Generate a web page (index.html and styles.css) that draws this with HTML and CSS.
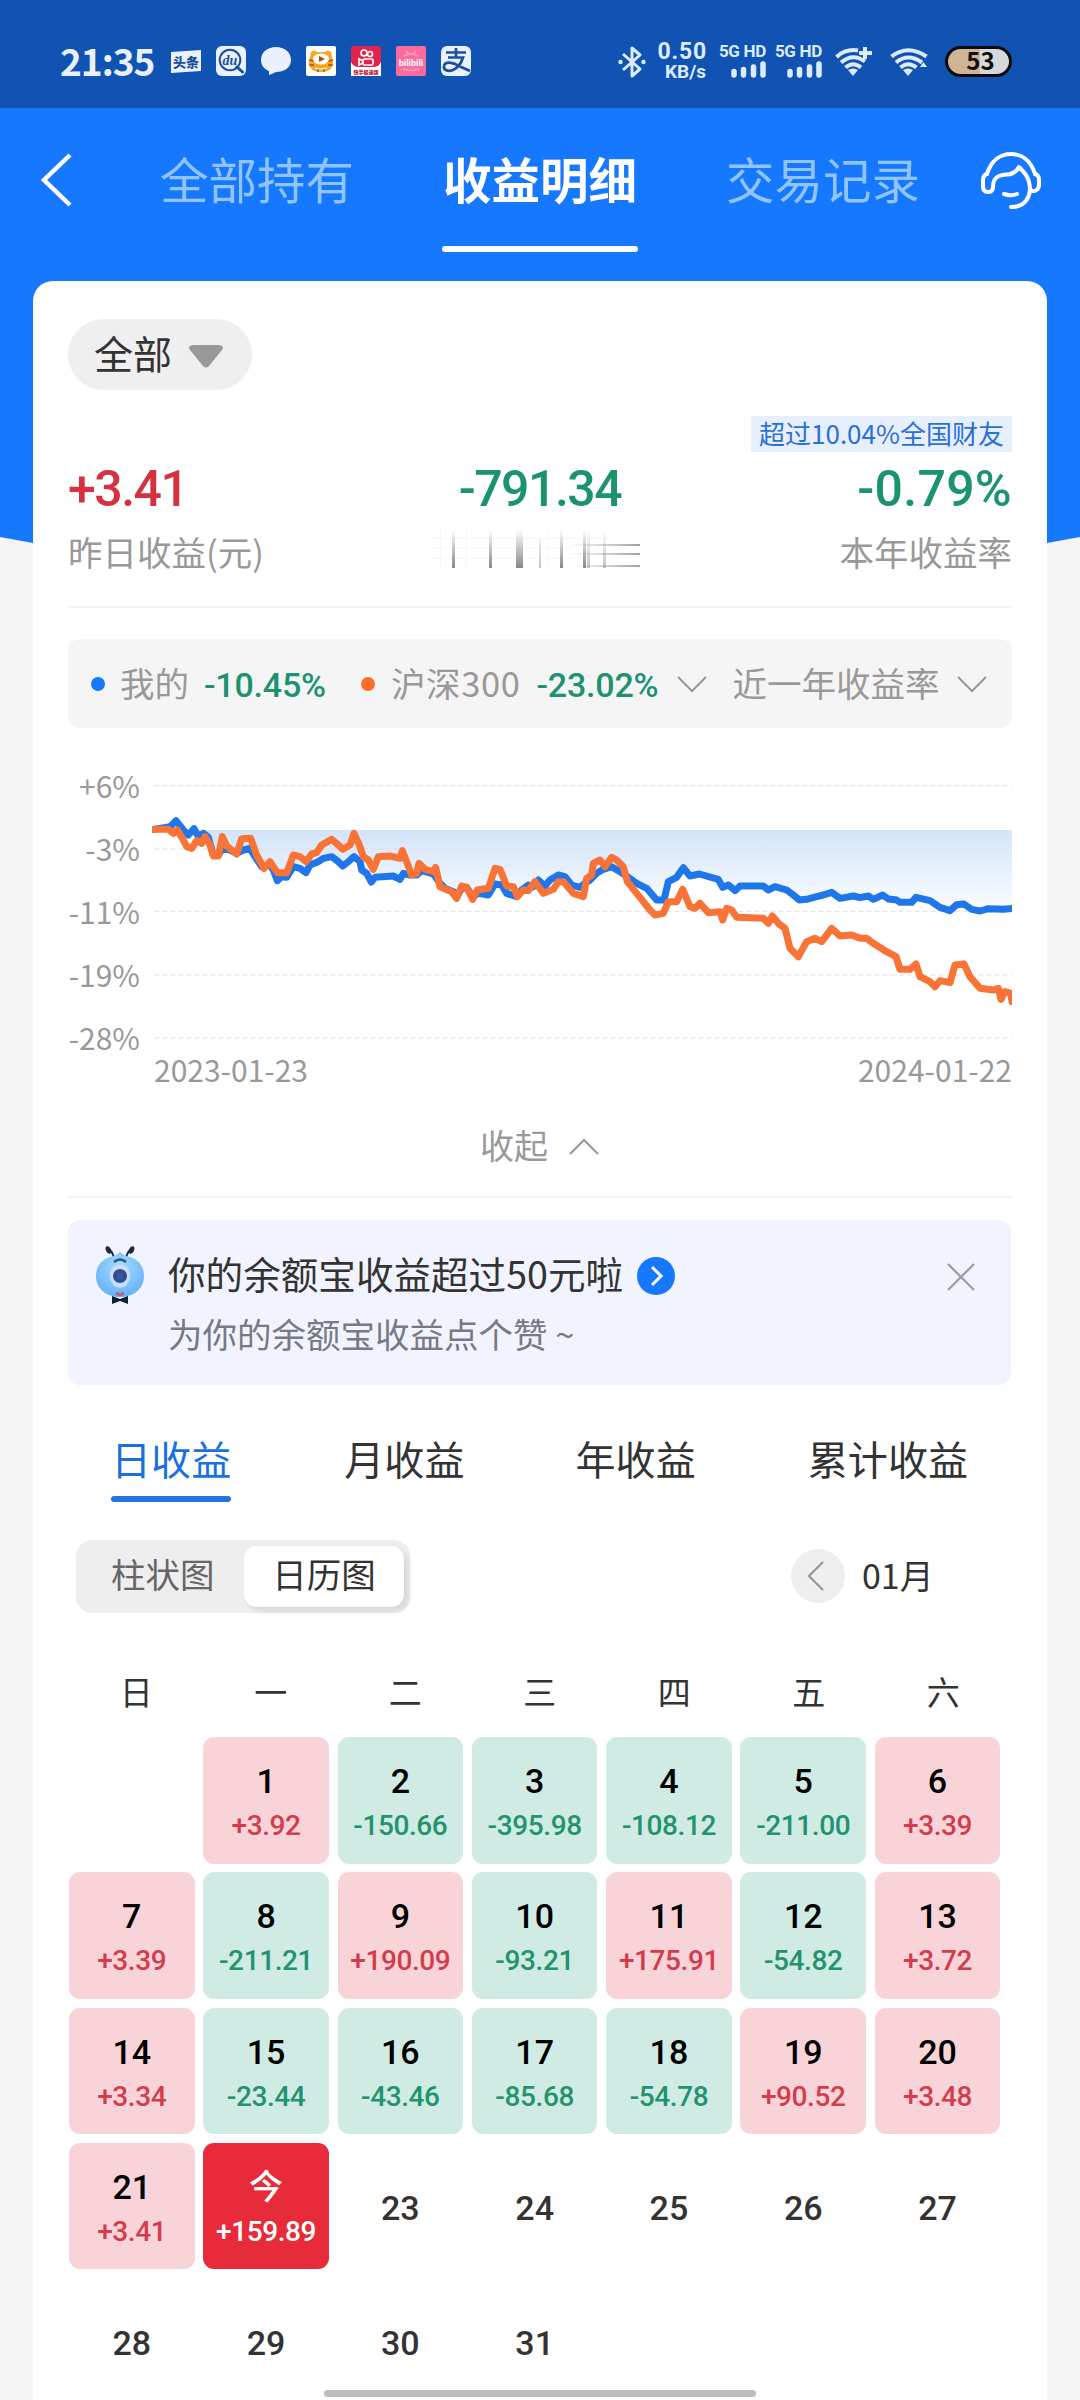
FILE: index.html
```html
<!DOCTYPE html>
<html lang="zh-CN">
<head>
<meta charset="utf-8">
<title>收益明细</title>
<link rel="stylesheet" href="styles.css">
</head>
<body>
<div class="app">
  <div class="hero"></div>

  <header class="status">
    <span class="clock">21:35</span>
    <div class="notices">
      <svg viewBox="0 0 30 30"><path d="M0 6 30 4V25L0 27Z" fill="#e9f1fd"/><text x="15" y="20.500" font-size="13" font-weight="900" text-anchor="middle" fill="#1b4f9c">头条</text></svg>
      <svg viewBox="0 0 30 30"><rect width="30" height="30" rx="6" fill="#e9f1fd"/><circle cx="14" cy="14" r="10.300" fill="none" stroke="#1b4f9c" stroke-width="2"/><path d="M21 21 26.500 26" stroke="#1b4f9c" stroke-width="3" stroke-linecap="round"/><text x="14" y="18.500" font-size="14" font-style="italic" font-weight="700" text-anchor="middle" fill="#1b4f9c" class="serif">du</text></svg>
      <svg viewBox="0 0 30 30"><path d="M15 1C23 1 30 6 30 14S23 26 15 26Q11 28 8 29L8 25C3 23 0 19 0 14 0 6 7 1 15 1Z" fill="#e9f1fd"/></svg>
      <svg viewBox="0 0 30 30"><rect width="30" height="30" rx="2" fill="#fff"/><path d="M5 6Q8 3 11 6H19Q22 3 25 6L27 17Q26 26 15 26T3 17Z" fill="#f5a623"/><path d="M3 14 8 15M3 19 8 19M27 14 22 15M27 19 22 19M12 23V26M18 23V26" stroke="#a8590c" stroke-width="1.500"/><ellipse cx="15" cy="13" rx="8" ry="5.500" fill="#fff"/><path d="M13 10 19 13 13 16Z" fill="#b8431e"/><path d="M9 22Q15 24 21 22" stroke="#fff" stroke-width="1.200" fill="none"/></svg>
      <svg viewBox="0 0 30 30"><rect width="30" height="30" rx="2" fill="#e4234d"/><path d="M0 16Q2 21 8 21H22Q28 21 30 16V30H0Z" fill="#fff"/><g fill="none" stroke="#fff" stroke-width="1.700"><circle cx="13" cy="7" r="3"/><circle cx="19" cy="8" r="2.500"/><rect x="12" y="13" width="10" height="6" rx="1.500" fill="#e4234d"/><path d="M12 15 8 13V19L12 17"/></g><text x="15" y="27.500" font-size="5" font-weight="900" text-anchor="middle" fill="#c51535">快手极速版</text></svg>
      <svg viewBox="0 0 30 30"><rect width="30" height="30" rx="2" fill="#fb6c9c"/><path d="M10 5 13 8M20 5 17 8M8 10Q15 6 22 10M7 23Q15 26 23 23" stroke="#ff9dbf" stroke-width="1.500" fill="none"/><text x="15" y="19.500" font-size="9" font-weight="700" text-anchor="middle" fill="#fff" class="latin">bilibili</text></svg>
      <svg viewBox="0 0 30 30"><rect width="30" height="30" rx="6" fill="#e9f1fd"/><path d="M5 6.500H25M15 2V11M7 11.500H22Q19 21 12 24C7 26 2 24 3 20 4 15 12 16 18 20L29 25" fill="none" stroke="#1b4f9c" stroke-width="2.700"/></svg>
    </div>
    <div class="system">
      <svg class="bt" viewBox="0 0 28 32"><path d="M5 8 22 23 14 30V2L22 9 5 24" fill="none" stroke="#dcebff" stroke-width="3" stroke-linejoin="round"/><circle cx="2.500" cy="16" r="2.200" fill="#dcebff"/><circle cx="25.500" cy="16" r="2.200" fill="#dcebff"/></svg>
      <div class="speed"><b>0.50</b><i>KB/s</i></div>
      <div class="cell"><b>5G HD</b><svg viewBox="0 0 35 17"><path d="M3 10.500V14M12.500 8.500V14M22.500 6V14M32 3V14" stroke="#dcebff" stroke-width="5.500" stroke-linecap="round"/></svg></div>
      <div class="cell cell2"><b>5G HD</b><svg viewBox="0 0 35 17"><path d="M3 10.500V14M12.500 8.500V14M22.500 6V14M32 3V14" stroke="#dcebff" stroke-width="5.500" stroke-linecap="round"/></svg></div>
      <svg class="wifi" viewBox="0 0 38 32"><g fill="none" stroke="#dcebff" stroke-width="4"><path d="M1.500 11Q11 2.500 23 4.500"/><path d="M6 16.500Q18 6.500 30 15.500"/><path d="M10.500 21.500Q18 15 26 21.500"/><path d="M30 1V13M24 7H37"/></g><path d="M13 24Q18 21 23 24L18 30Z" fill="#dcebff"/></svg>
      <svg class="wifi wifi2" viewBox="0 0 38 32"><g fill="none" stroke="#dcebff" stroke-width="4"><path d="M1.500 10.500Q18-2 36.500 10.500"/><path d="M6 16.500Q18 6.500 32 16.500"/><path d="M10.500 21.500Q18 15 26.500 21.500"/></g><path d="M13 24Q18 21 23 24L18 30ZM30 21 33.500 16 37 21Z" fill="#dcebff"/></svg>
      <span class="battery">53</span>
    </div>
  </header>

  <nav class="topnav">
    <svg class="back" viewBox="0 0 32 56"><path d="M30 3 4 28 30 53" fill="none" stroke="#fff" stroke-width="4.500"/></svg>
    <span class="toptab">全部持有</span>
    <span class="toptab on">收益明细</span>
    <span class="toptab">交易记录</span>
    <svg class="service" viewBox="0 0 60 58"><g fill="none" stroke="#fff" stroke-width="4" stroke-linejoin="round" stroke-linecap="round"><path d="M6 22C10 9 19 2 30 2S50 9 54 22"/><path d="M6 22Q2 23 2 28V34Q2 40 7 40 12 40 12 35C12 24 19 23 26 22.500 33 22 36 19 38 15 45 22 49 27 49 38 54 41 58 37 58 33V28Q58 23 54 22"/><path d="M49 38C48 48 42 55 30 55"/><path d="M23 42Q30 44.500 36 42"/></g></svg>
  </nav>

  <main class="card">
    <div class="filter"><span>全部</span><svg viewBox="0 0 34 23"><path d="M4 0H30Q36 1 33 5L20 21Q17 24 14 21L1 5Q-2 1 4 0Z" fill="#999"/></svg></div>

    <section class="stats">
      <div class="stat">
        <b class="num up">+3.41</b>
        <span>昨日收益(元)</span>
      </div>
      <div class="stat mid">
        <b class="num down">-791.34</b>
        <svg class="smudge" viewBox="0 0 208 40">
          <defs>
            <linearGradient id="v" x1="0" y1="0" x2="0" y2="1"><stop offset="0" stop-color="#888" stop-opacity="0"/><stop offset="1" stop-color="#888"/></linearGradient>
            <linearGradient id="h" x1="0" x2="1" y1="0" y2="0"><stop offset="0" stop-color="#999" stop-opacity="0"/><stop offset="1" stop-color="#888"/></linearGradient>
          </defs>
          <path d="M0 8h180v1H0zM0 18h140v1H0zM0 28h140v1H0zM8 0h1v38h-1zM34 0h1v38h-1zM115 0h1v38h-1z" fill="#f7f7f7"/>
          <path d="M20 0h3v38h-3zM57 0h3v38h-3zM84 0h7v38h-7zM128 0h3v38h-3zM151 0h3v38h-3z" fill="url(#v)"/>
          <path d="M155 0h3v38h-3zM171 0h3v38h-3zM107 8h2v30h-2z" fill="url(#v)" opacity=".5"/>
          <path d="M138 14h70v2h-70zM138 23h70v2h-70zM138 35h70v2h-70z" fill="url(#h)" opacity=".8"/>
        </svg>
      </div>
      <div class="stat end">
        <em class="rank">超过10.04%全国财友</em>
        <b class="num down">-0.79%</b>
        <span>本年收益率</span>
      </div>
    </section>

    <section class="legend">
      <i class="dot blue"></i><span>我的</span><b class="num down v1">-10.45%</b>
      <i class="dot orange"></i><span class="bench">沪深300</span><b class="num down v2">-23.02%</b>
      <svg class="chev" viewBox="0 0 30 18"><path d="M1 2 15 16 29 2" fill="none" stroke="#999" stroke-width="2"/></svg>
      <span class="range">近一年收益率</span>
      <svg class="chev c2" viewBox="0 0 30 18"><path d="M1 2 15 16 29 2" fill="none" stroke="#999" stroke-width="2"/></svg>
    </section>

    <section class="chart">
      <div class="ylabels"><span>+6%</span><span>-3%</span><span>-11%</span><span>-19%</span><span>-28%</span></div>
      <div class="plot">
        <svg viewBox="336 501 2580 840">
          <defs><linearGradient id="fill" gradientUnits="userSpaceOnUse" x1="0" y1="690" x2="0" y2="930"><stop offset="0" stop-color="#d3e4f9"/><stop offset="1" stop-color="#fbfdff"/></linearGradient></defs>
          <path id="area" fill="url(#fill)" d="M462 690 475 710 505 712 520 765 548 745 590 760 630 745 665 800 700 810 712 842 740 832 760 800 798 818 835 785 875 770 908 798 942 770 965 810 994 846 1060 828 1090 820 1180 822 1200 850 1250 890 1298 890 1345 885 1365 852 1400 880 1430 890 1465 855 1495 840 1515 858 1555 825 1595 855 1620 862 1650 840 1670 820 1715 800 1762 830 1820 865 1850 900 1872 900 1885 845 1930 803 1950 828 2035 838 2048 862 2100 858 2170 858 2240 870 2278 900 2350 885 2375 877 2400 895 2485 888 2570 900 2615 907 2628 892 2670 902 2730 932 2772 912 2820 933 2916 925V690Z"/>
          <path d="M345 557H2916M345 747H2916M345 934H2916M345 1125H2916M345 1314H2916" stroke="#dedede" stroke-width="3" stroke-dasharray="13 11" fill="none"/>
          <polyline class="line mine" points="340,688 390,680 408,662 430,690 445,705 462,686 475,710 490,700 505,712 520,765 535,765 548,745 570,750 590,760 610,750 630,745 645,770 665,800 690,795 700,810 712,842 725,830 740,832 760,800 780,805 798,818 810,795 835,785 850,775 875,770 895,785 908,798 925,785 942,770 960,785 965,810 980,820 994,846 1005,832 1060,828 1080,838 1090,820 1110,825 1130,825 1145,812 1180,822 1200,850 1215,865 1240,875 1250,890 1265,865 1280,862 1298,890 1315,880 1345,885 1365,852 1385,855 1400,880 1430,890 1445,870 1465,855 1480,860 1495,840 1515,858 1530,840 1555,825 1575,830 1595,855 1620,862 1635,850 1650,840 1670,820 1690,808 1715,800 1740,815 1762,830 1790,850 1820,865 1850,900 1872,900 1885,845 1910,832 1930,803 1950,828 1978,822 2035,838 2048,862 2065,855 2085,872 2100,858 2170,858 2185,870 2205,860 2240,870 2260,885 2278,900 2300,898 2330,890 2350,885 2375,877 2400,895 2440,888 2460,893 2485,888 2500,898 2528,885 2545,897 2570,900 2580,907 2615,907 2628,892 2670,902 2700,922 2730,932 2750,914 2772,912 2795,928 2820,933 2845,926 2890,928 2920,925"/>
          <polyline class="line index" points="342,688 385,688 400,700 412,690 430,720 440,740 455,745 470,722 485,730 495,710 510,735 520,768 535,768 547,710 560,738 590,762 605,716 632,715 650,765 672,805 690,785 712,818 740,818 760,765 780,770 798,785 815,762 830,758 845,735 875,718 895,735 908,748 930,735 942,700 958,735 970,770 985,780 1000,808 1015,770 1050,768 1080,775 1087,752 1100,785 1115,825 1130,820 1137,790 1155,808 1180,815 1187,802 1200,860 1235,875 1250,895 1265,858 1280,862 1298,898 1312,870 1345,865 1365,805 1380,808 1400,858 1420,860 1432,890 1450,870 1465,872 1485,845 1510,880 1540,868 1555,845 1570,845 1600,880 1630,890 1640,835 1655,825 1660,790 1680,780 1695,800 1715,772 1730,780 1750,800 1762,845 1790,880 1810,905 1830,930 1845,945 1870,940 1885,905 1910,905 1928,868 1950,920 1965,925 1980,910 2005,938 2040,935 2048,960 2060,925 2075,930 2090,952 2170,955 2185,970 2197,948 2215,970 2235,985 2250,1045 2275,1070 2300,1025 2325,1015 2345,1025 2375,985 2400,1008 2435,1005 2460,1015 2480,1015 2500,1030 2540,1055 2568,1070 2580,1108 2610,1108 2628,1092 2640,1130 2670,1145 2685,1160 2700,1142 2730,1148 2745,1095 2772,1092 2790,1130 2820,1165 2860,1170 2875,1165 2883,1198 2895,1175 2912,1180 2916,1205"/>
        </svg>
        <div class="dates"><span>2023-01-23</span><span>2024-01-22</span></div>
      </div>
    </section>

    <div class="fold"><span>收起</span><svg class="chev" viewBox="0 0 30 18"><path d="M1 16 15 2 29 16" fill="none" stroke="#999" stroke-width="2"/></svg></div>

    <section class="banner">
      <svg class="ant" viewBox="0 0 48 58">
        <defs><radialGradient id="ab" cx=".5" cy=".35" r=".65"><stop offset="0" stop-color="#a8dcff"/><stop offset="1" stop-color="#65b1f8"/></radialGradient></defs>
        <path d="M18 13Q17 5 12 3M30 13Q31 5 36 3" fill="none" stroke="#24344f" stroke-width="2"/>
        <ellipse cx="12.500" cy="4" rx="2.500" ry="4" transform="rotate(-25 12.500 4)" fill="#1d2a44"/><ellipse cx="35.500" cy="4" rx="2.500" ry="4" transform="rotate(25 35.500 4)" fill="#1d2a44"/>
        <path d="M24 6Q28 10 34 11C43 14 48 21 48 30 48 43 37 51 24 51S0 43 0 30C0 21 5 14 14 11Q20 10 24 6Z" fill="url(#ab)"/>
        <path d="M18 16Q24 11 30 16" fill="none" stroke="#22577f" stroke-width="2.500"/>
        <ellipse cx="24" cy="30" rx="10" ry="11.500" fill="#c9dffc"/><circle cx="24" cy="30" r="7" fill="#2d4c91"/><circle cx="24" cy="30" r="3.500" fill="#3558a0"/>
        <path d="M20 47Q24 50 28 47" stroke="#ad6680" stroke-width="3" fill="none"/>
        <path d="M16 50 24 53 32 50V58L24 55 16 58Z" fill="#151d32"/>
      </svg>
      <div class="msg">
        <div class="title"><span>你的余额宝收益超过50元啦</span><svg viewBox="0 0 38 38"><circle cx="19" cy="19" r="19" fill="#1677ff"/><path d="M15 10 24 19 15 28" fill="none" stroke="#fff" stroke-width="3"/></svg></div>
        <div class="sub">为你的余额宝收益点个赞 ~</div>
      </div>
      <svg class="close" viewBox="0 0 28 28"><path d="M1 1 27 27M27 1 1 27" stroke="#999fa8" stroke-width="2.300"/></svg>
    </section>

    <div class="tabs"><span class="tab on">日收益</span><span class="tab">月收益</span><span class="tab">年收益</span><span class="tab">累计收益</span></div>

    <div class="tools">
      <div class="segment"><span>柱状图</span><span class="on">日历图</span></div>
      <div class="month"><svg viewBox="0 0 54 54"><circle cx="27" cy="27" r="27" fill="#efefef"/><path d="M32 13 18 27 32 41" fill="none" stroke="#999" stroke-width="2.300"/></svg><span>01月</span></div>
    </div>

    <div class="week"><span>日</span><span>一</span><span>二</span><span>三</span><span>四</span><span>五</span><span>六</span></div>
    <div class="calendar">
      <div></div>
      <div class="day gain"><b>1</b><span>+3.92</span></div>
      <div class="day loss"><b>2</b><span>-150.66</span></div>
      <div class="day loss"><b>3</b><span>-395.98</span></div>
      <div class="day loss"><b>4</b><span>-108.12</span></div>
      <div class="day loss"><b>5</b><span>-211.00</span></div>
      <div class="day gain"><b>6</b><span>+3.39</span></div>
      <div class="day gain"><b>7</b><span>+3.39</span></div>
      <div class="day loss"><b>8</b><span>-211.21</span></div>
      <div class="day gain"><b>9</b><span>+190.09</span></div>
      <div class="day loss"><b>10</b><span>-93.21</span></div>
      <div class="day gain"><b>11</b><span>+175.91</span></div>
      <div class="day loss"><b>12</b><span>-54.82</span></div>
      <div class="day gain"><b>13</b><span>+3.72</span></div>
      <div class="day gain"><b>14</b><span>+3.34</span></div>
      <div class="day loss"><b>15</b><span>-23.44</span></div>
      <div class="day loss"><b>16</b><span>-43.46</span></div>
      <div class="day loss"><b>17</b><span>-85.68</span></div>
      <div class="day loss"><b>18</b><span>-54.78</span></div>
      <div class="day gain"><b>19</b><span>+90.52</span></div>
      <div class="day gain"><b>20</b><span>+3.48</span></div>
      <div class="day gain"><b>21</b><span>+3.41</span></div>
      <div class="day today"><b>今</b><span>+159.89</span></div>
      <div class="day idle"><b>23</b></div>
      <div class="day idle"><b>24</b></div>
      <div class="day idle"><b>25</b></div>
      <div class="day idle"><b>26</b></div>
      <div class="day idle"><b>27</b></div>
      <div class="day idle"><b>28</b></div>
      <div class="day idle"><b>29</b></div>
      <div class="day idle"><b>30</b></div>
      <div class="day idle"><b>31</b></div>
    </div>
  </main>
  <div class="homebar"></div>
</div>
</body>
</html>
```
FILE: styles.css
```css
* { box-sizing: border-box; }
body { margin: 0; background: #f5f5f5; font-family: "Noto Sans CJK SC", sans-serif; color: #333; }
svg { display: block; flex: none; }
b, i, em { font-style: normal; }
span, b { white-space: nowrap; }
.serif { font-family: "Liberation Serif", serif; }
.latin { font-family: Roboto, sans-serif; }

.app { position: relative; width: 1080px; height: 2400px; overflow: hidden; }
.hero { position: absolute; inset: 0 0 auto; z-index: -1; height: 560px; background: #1677ff; clip-path: polygon(0 0, 100% 0, 100% 537px, 1047px 543px, 540px 560px, 33px 543px, 0 537px); }

/* status bar */
.status { display: flex; height: 108px; background: #1153b3; color: #dcebff; }
.clock { width: 111px; margin-left: 60px; padding-top: 30px; font: 700 37px/60px "Noto Sans CJK SC", sans-serif; letter-spacing: -1px; color: #e9f1fd; }
.notices { display: flex; gap: 15px; padding-top: 46px; }
.notices svg { width: 30px; height: 30px; overflow: visible; }
.system { display: flex; margin-left: 147px; }
.bt { width: 28px; height: 32px; margin-top: 46px; }
.speed { display: flex; flex-direction: column; align-items: flex-end; width: 61px; margin-top: 41px; font-family: Roboto, sans-serif; }
.speed b { line-height: 22px; font-weight: 700; font-size: 23px; letter-spacing: .8px; }
.speed i { line-height: 18px; font-size: 19px; font-weight: 700; padding-right: 1px; }
.cell { display: flex; flex-direction: column; align-items: flex-end; width: 49px; margin: 43px 0 0 10px; }
.cell2 { margin-left: 7px; }
.cell b { font: 700 17px/16px Roboto, sans-serif; letter-spacing: -.3px; }
.cell svg { width: 35px; height: 17px; margin-top: 2px; }
.wifi { width: 38px; height: 32px; margin: 46px 0 0 13px; }
.wifi2 { margin-left: 17px; }
.battery { width: 67px; height: 31px; margin: 46px 0 0 17px; border: 3px solid #0b0b0f; border-radius: 16px; background: linear-gradient(90deg, #d0b496 0 53%, #d6d8dc 53%); color: #111; font-weight: 700; font-size: 24px; line-height: 22px; padding-left: 4px; text-align: center; }

/* navigation */
.topnav { display: flex; height: 173px; align-items: flex-start; }
.back { width: 32px; height: 56px; margin: 44px 0 0 40px; }
.toptab { width: 196px; height: 144px; padding-top: 34px; margin-left: 87px; text-align: center; font-size: 48.500px; line-height: 72px; color: #8fc4ff; }
.toptab.on { font-weight: 700; color: #fff; margin-left: 87px; }
.toptab.on::after { content: ""; display: block; height: 6px; margin-top: 32px; border-radius: 3px; background: #fff; }
.toptab.on + .toptab { margin-left: 87px; }
.service { width: 60px; height: 58px; margin: 44px 0 0 60px; }

/* card */
.card { margin: 0 33px; height: 2119px; padding: 38px 35px 0; background: #fff; border-radius: 20px 20px 0 0; }
.filter { display: flex; align-items: center; gap: 17px; width: 184px; height: 71px; padding-left: 26px; border-radius: 36px; background: #efefef; font-size: 39px; line-height: 64px; }
.filter span { margin-top: -6px; }
.filter svg { width: 34px; height: 23px; margin-top: 3px; }

.stats { display: grid; grid-template-columns: 1fr 1fr 1fr; height: 218px; padding-top: 26px; border-bottom: 2px solid #f3f3f3; }
.stat { display: flex; flex-direction: column; align-items: flex-start; padding-top: 43px; color: #999; font-size: 34.500px; line-height: 50px; }
.stat span { margin-top: 7px; }
.num { font-family: Roboto, sans-serif; font-weight: 500; }
.stat .num { font-size: 50px; line-height: 60px; letter-spacing: -1.500px; }
.up { color: #d5313f; }
.down { color: #1c9370; }
.mid { padding-left: 49px; }
.mid .num { margin-left: 27px; }
.smudge { width: 208px; height: 40px; margin-top: 11px; }
.end { align-items: flex-end; padding-top: 0; }
.end .num { letter-spacing: .3px; }
.rank { width: 261px; height: 36px; margin-bottom: 7px; text-align: center; background: #e7effd; color: #2b6fd9; font-size: 26px; line-height: 34px; white-space: nowrap; }

.legend { display: flex; align-items: center; height: 89px; margin-top: 31px; border-radius: 12px; background: #f5f5f5; color: #999; font-size: 34.500px; }
.legend span { line-height: 50px; margin: -4px 0 0 15px; }
.legend .bench { letter-spacing: .6px; margin-left: 16px; }
.legend .num { font-size: 34px; line-height: 40px; margin-top: 3px; letter-spacing: -.2px; }
.dot { width: 14px; height: 14px; border-radius: 50%; flex: none; }
.blue { background: #1677ff; margin-left: 23px; }
.orange { background: #ff6d2d; }
.v1 { width: 123px; margin-left: 15px; margin-right: 34px; }
.v2 { width: 123px; margin-left: 16px; }
.chev { width: 30px; height: 18px; }
.legend .chev { margin-left: 18px; }
.legend .range { margin-left: 25px; }
.legend .c2 { margin-left: 18px; }

.chart { display: flex; height: 372px; color: #999; font-size: 30px; }
.ylabels { display: flex; flex-direction: column; width: 72px; padding-top: 27px; align-items: flex-end; }
.ylabels span { height: 63px; line-height: 60px; }
.plot { width: 860px; margin-left: 12px; padding-top: 39px; }
.plot svg { width: 860px; height: 280px; }
.line { fill: none; stroke-width: 21; stroke-linejoin: round; stroke-linecap: round; }
.mine { stroke: #1f76ea; }
.index { stroke: #f87335; }
.dates { display: flex; justify-content: space-between; padding-left: 2px; line-height: 44px; }

.fold { display: flex; height: 98px; padding: 20px 0 0 412px; border-bottom: 2px solid #f3f3f3; color: #999; font-size: 34px; line-height: 50px; }
.fold .chev { margin: 18px 0 0 21px; }

.banner { display: flex; width: 943px; height: 165px; margin-top: 22px; border-radius: 12px; background: #f1f4ff; }
.ant { width: 48px; height: 58px; margin: 26px 0 0 28px; }
.msg { width: 803px; padding: 27px 0 0 24px; }
.title { display: flex; align-items: center; gap: 14px; font-size: 37.600px; line-height: 54px; }
.title span { margin-top: -1px; }
.title svg { width: 38px; height: 38px; margin-top: 4px; }
.sub { margin-top: 8px; font-size: 34.500px; line-height: 50px; color: #777a82; }
.close { width: 28px; height: 28px; margin: 43px 0 0; }

.tabs { display: flex; gap: 112px; padding: 45px 0 0 43px; height: 154px; }
.tab { height: 72px; font-size: 40.100px; line-height: 56px; }
.tab:nth-child(2) { margin: 0 -1px 0 1px; }
.tab.on { color: #1b70e0; }
.tab.on::after { content: ""; display: block; height: 6px; margin-top: 10px; border-radius: 3px; background: #2874dd; }

.tools { display: flex; height: 74px; align-items: center; padding-left: 8px; }
.segment { display: flex; width: 334px; height: 73px; padding: 6px; border-radius: 16px; background: #eee; color: #666; font-size: 34.500px; line-height: 54px; }
.segment span { width: 162px; padding-left: 29px; }
.segment .on { width: 160px; padding: 0; text-align: center; background: #fff; color: #333; border-radius: 13px; box-shadow: 4px 4px 6px rgba(0,0,0,.1); }
.month { display: flex; align-items: center; margin-left: 381px; gap: 17px; font-size: 34px; line-height: 50px; }
.month svg { width: 54px; height: 54px; }
.month span { margin-top: -3px; }

.week { display: grid; grid-template-columns: repeat(7, 134.500px); height: 124px; padding: 53px 0 0 1px; font-size: 33px; line-height: 50px; text-align: center; }
.calendar { display: grid; grid-template-columns: repeat(7, 125.500px); grid-auto-rows: 126.500px; gap: 8.800px; padding-left: 1px; }
.day { display: flex; flex-direction: column; align-items: center; padding-top: 24px; border-radius: 11px; font-family: Roboto, "Noto Sans CJK SC", sans-serif; font-weight: 500; color: #000; }
.day b { font-size: 34px; line-height: 40px; font-weight: 500; }
.day span { margin-top: 8px; font-size: 28px; line-height: 34px; letter-spacing: -.4px; }
.gain { background: #f8d4d9; }
.gain span { color: #d33c4c; }
.loss { background: #d0ebe3; }
.loss span { color: #23936f; }
.day.today { background: #e72b3a; color: #fff; }
.day.idle { padding-top: 45px; color: #333; }

.homebar { position: absolute; left: 324px; top: 2390px; width: 432px; height: 7px; border-radius: 4px; background: #bdbdbd; }
```
